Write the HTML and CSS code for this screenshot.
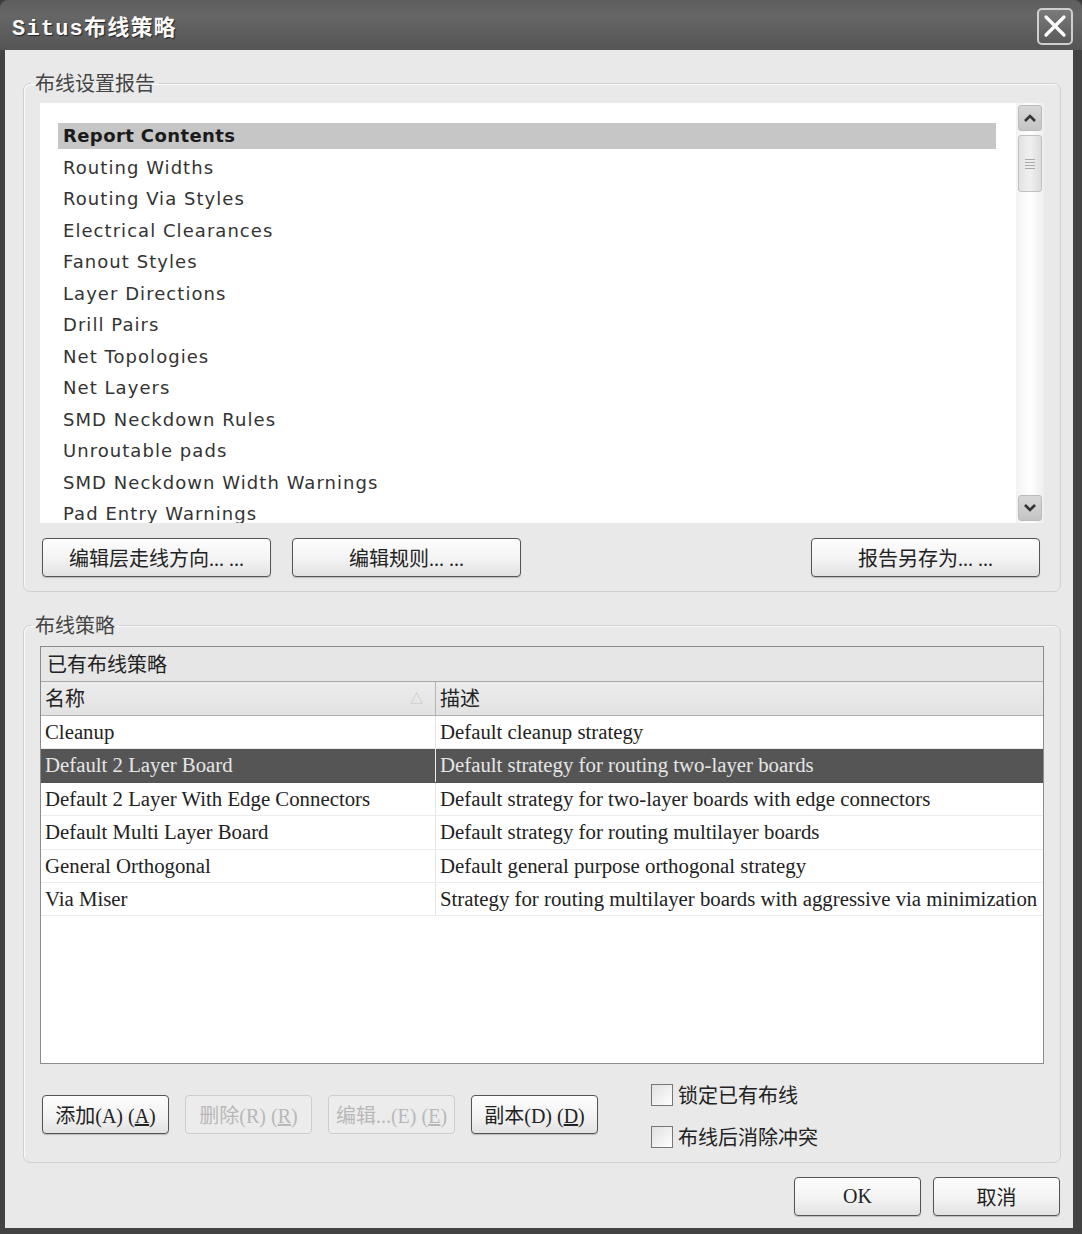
FILE: index.html
```html
<!DOCTYPE html>
<html lang="zh-CN">
<head>
    <meta charset="UTF-8">
    <title>Situs布线策略</title>
    <link rel="stylesheet" href="styles.css">
</head>
<body>
    <div class="window">
        <div class="titlebar">
            <span class="title">Situs布线策略</span>
            <span class="close-btn">
                <svg width="24" height="24" viewBox="0 0 24 24"><path d="M3 3 L21 21 M21 3 L3 21" stroke="#fff" stroke-width="3.2" stroke-linecap="round"/></svg>
            </span>
        </div>

        <div class="client">
            <fieldset class="group">
                <legend>布线设置报告</legend>
                <div class="listbox">
                    <ul class="list">
                        <li class="list-head">Report Contents</li>
                        <li>Routing Widths</li>
                        <li>Routing Via Styles</li>
                        <li>Electrical Clearances</li>
                        <li>Fanout Styles</li>
                        <li>Layer Directions</li>
                        <li>Drill Pairs</li>
                        <li>Net Topologies</li>
                        <li>Net Layers</li>
                        <li>SMD Neckdown Rules</li>
                        <li>Unroutable pads</li>
                        <li>SMD Neckdown Width Warnings</li>
                        <li>Pad Entry Warnings</li>
                    </ul>
                    <div class="scrollbar">
                        <span class="sb-btn">
                            <svg width="14" height="10" viewBox="0 0 14 10"><path d="M2 8 L7 3 L12 8" fill="none" stroke="#333" stroke-width="2.6"/></svg>
                        </span>
                        <span class="sb-thumb"><i></i><i></i><i></i><i></i></span>
                        <span class="sb-track"></span>
                        <span class="sb-btn">
                            <svg width="14" height="10" viewBox="0 0 14 10"><path d="M2 2 L7 7 L12 2" fill="none" stroke="#333" stroke-width="2.6"/></svg>
                        </span>
                    </div>
                </div>
                <div class="report-actions">
                    <button class="btn wide">编辑层走线方向... ...</button>
                    <button class="btn wide">编辑规则... ...</button>
                    <span class="spacer"></span>
                    <button class="btn wide">报告另存为... ...</button>
                </div>
            </fieldset>

            <fieldset class="group strategies">
                <legend>布线策略</legend>
                <div class="grid">
                    <div class="grid-caption">已有布线策略</div>
                    <div class="grid-row grid-header">
                        <div class="cell name">名称<span class="sort">&#9651;</span></div>
                        <div class="cell">描述</div>
                    </div>
                    <div class="grid-row">
                        <div class="cell name">Cleanup</div>
                        <div class="cell">Default cleanup strategy</div>
                    </div>
                    <div class="grid-row selected">
                        <div class="cell name">Default 2 Layer Board</div>
                        <div class="cell">Default strategy for routing two-layer boards</div>
                    </div>
                    <div class="grid-row">
                        <div class="cell name">Default 2 Layer With Edge Connectors</div>
                        <div class="cell">Default strategy for two-layer boards with edge connectors</div>
                    </div>
                    <div class="grid-row">
                        <div class="cell name">Default Multi Layer Board</div>
                        <div class="cell">Default strategy for routing multilayer boards</div>
                    </div>
                    <div class="grid-row">
                        <div class="cell name">General Orthogonal</div>
                        <div class="cell">Default general purpose orthogonal strategy</div>
                    </div>
                    <div class="grid-row">
                        <div class="cell name">Via Miser</div>
                        <div class="cell">Strategy for routing multilayer boards with aggressive via minimization</div>
                    </div>
                </div>
                <div class="strategy-actions">
                    <button class="btn small">添加(A) (<u>A</u>)</button>
                    <button class="btn small" disabled>删除(R) (<u>R</u>)</button>
                    <button class="btn small" disabled>编辑...(E) (<u>E</u>)</button>
                    <button class="btn small">副本(D) (<u>D</u>)</button>
                    <div class="checks">
                        <label class="check"><span class="box"></span>锁定已有布线</label>
                        <label class="check"><span class="box"></span>布线后消除冲突</label>
                    </div>
                </div>
            </fieldset>

            <div class="dialog-actions">
                <button class="btn small ok">OK</button>
                <button class="btn small">取消</button>
            </div>
        </div>
    </div>
</body>
</html>
```

FILE: styles.css
```css
* {
    margin: 0;
    padding: 0;
    box-sizing: border-box;
}

body {
    width: 1082px;
    height: 1234px;
    background: #3c3c3c;
    font-family: "Noto Sans CJK SC", sans-serif;
    color: #222;
    overflow: hidden;
}

.window {
    width: 1082px;
    height: 1234px;
    background: #434343;
    border-radius: 8px 8px 0 0;
    padding: 0 9px 6px 5px;
    display: flex;
    flex-direction: column;
}

.titlebar {
    height: 50px;
    margin: 0 -9px 0 -5px;
    padding: 0 9px 0 12px;
    background: linear-gradient(#5e5e5e, #666 30%, #555 100%);
    border-radius: 8px 8px 0 0;
    display: flex;
    align-items: center;
    justify-content: space-between;
}

.title {
    font-family: "Liberation Mono", "Noto Sans CJK SC", monospace;
    font-weight: bold;
    font-size: 22px;
    color: #fafafa;
    letter-spacing: 1.2px;
    text-shadow: 1px 1px 1px #222;
}

.close-btn {
    width: 36px;
    height: 37px;
    margin-top: 2px;
    border: 2px solid #cfcfcf;
    border-radius: 5px;
    background: linear-gradient(#7a7a7a, #5a5a5a);
    display: flex;
    align-items: center;
    justify-content: center;
}

.client {
    flex: 1;
    background: #e9e9e9;
    padding: 23px 12px 0 18px;
}

.group {
    border: 1px solid #d0d0d0;
    border-radius: 7px;
    padding: 10px 16px 14px 16px;
    box-shadow: 1px 1px 0 #fafafa inset;
}

.group legend {
    font-size: 20px;
    line-height: 20px;
    color: #444;
    padding: 0 4px;
    margin-left: -9px;
}

.listbox {
    height: 420px;
    background: #fff;
    display: flex;
}

.list {
    flex: 1;
    list-style: none;
    padding: 20px 20px 0 18px;
    overflow: hidden;
    font-family: "DejaVu Sans", Verdana, sans-serif;
    font-size: 18px;
    color: #333;
    letter-spacing: 1.05px;
}

.list li {
    height: 26px;
    line-height: 26px;
    margin-bottom: 5.5px;
    padding-left: 5px;
    white-space: nowrap;
}

.list .list-head {
    background: #c6c6c6;
    font-weight: bold;
    color: #1a1a1a;
    letter-spacing: 0.4px;
}

.scrollbar {
    width: 28px;
    padding: 2px 2px;
    background: linear-gradient(90deg, #f2f2f2, #fff 50%, #eee);
    display: flex;
    flex-direction: column;
    gap: 4px;
}

.sb-btn {
    height: 26px;
    border: 1px solid #bbb;
    border-radius: 3px;
    background: linear-gradient(#d8d8d8, #c4c4c4);
    display: flex;
    align-items: center;
    justify-content: center;
}

.sb-thumb {
    height: 57px;
    border: 1px solid #c0c0c0;
    border-radius: 3px;
    background: linear-gradient(90deg, #e2e2e2, #f0f0f0 50%, #dcdcdc);
    display: flex;
    flex-direction: column;
    align-items: center;
    justify-content: center;
    gap: 2px;
}

.sb-thumb i {
    width: 10px;
    height: 1px;
    background: #aaa;
}

.sb-track {
    flex: 1;
}

.report-actions {
    display: flex;
    gap: 21px;
    margin: 15px 4px 0 2px;
}

.spacer {
    flex: 1;
}

.btn {
    height: 39px;
    border: 1px solid #555;
    border-radius: 4px;
    background: linear-gradient(#fdfdfd, #f3f3f3 55%, #e2e2e2);
    box-shadow: 0 1px 1px #bbb;
    font-family: "Liberation Serif", "Noto Sans CJK SC", serif;
    font-size: 20px;
    color: #222;
}

.btn.wide {
    width: 229px;
}

.btn.small {
    width: 127px;
}

.btn:disabled {
    border-color: #cdcdcd;
    color: #b8b8b8;
    background: #ececec;
    box-shadow: none;
}

.strategies {
    margin-top: 23px;
    padding-top: 11px;
    padding-bottom: 14px;
}

.grid {
    height: 418px;
    background: #fff;
    border: 1px solid #8c8c8c;
    font-family: "Liberation Serif", "Noto Sans CJK SC", serif;
    font-size: 20.8px;
    color: #222;
}

.grid-caption {
    height: 35px;
    line-height: 34px;
    padding-left: 6px;
    background: #e6e6e6;
    border-bottom: 1px solid #a8a8a8;
    font-family: "Noto Sans CJK SC", sans-serif;
    font-size: 20px;
}

.grid-row {
    height: 33.4px;
    display: grid;
    grid-template-columns: 395px 1fr;
    border-bottom: 1px solid #ececec;
}

.grid-header {
    height: 34px;
    background: linear-gradient(#ececec, #e2e2e2);
    border-bottom: 1px solid #b0b0b0;
    font-family: "Noto Sans CJK SC", sans-serif;
    font-size: 20px;
}

.cell {
    padding-left: 4px;
    line-height: 32px;
    white-space: nowrap;
    overflow: hidden;
}

.cell.name {
    border-right: 1px solid #e4e4e4;
    position: relative;
}

.grid-header .cell.name {
    border-right: 1px solid #b4b4b4;
}

.sort {
    position: absolute;
    right: 12px;
    top: 0;
    font-size: 13px;
    color: #c4c4c4;
}

.grid-row.selected {
    background: #555;
    color: #e6e6e6;
    border-bottom-color: #555;
}

.grid-row.selected .cell.name {
    border-right-color: #eee;
}

.strategy-actions {
    display: flex;
    align-items: center;
    gap: 16px;
    margin: 20px 0 0 2px;
}

.strategy-actions .btn {
    margin-bottom: 4px;
}

.checks {
    margin-left: 37px;
    display: flex;
    flex-direction: column;
    gap: 20px;
}

.check {
    display: flex;
    align-items: center;
    gap: 5px;
    font-size: 20px;
    line-height: 22px;
    color: #222;
}

.box {
    width: 22px;
    height: 22px;
    border: 1px solid #777;
    background: linear-gradient(135deg, #e0e0e0, #fff);
}

.dialog-actions {
    display: flex;
    justify-content: flex-end;
    gap: 12px;
    margin-top: 14px;
    padding-right: 1px;
}
```
